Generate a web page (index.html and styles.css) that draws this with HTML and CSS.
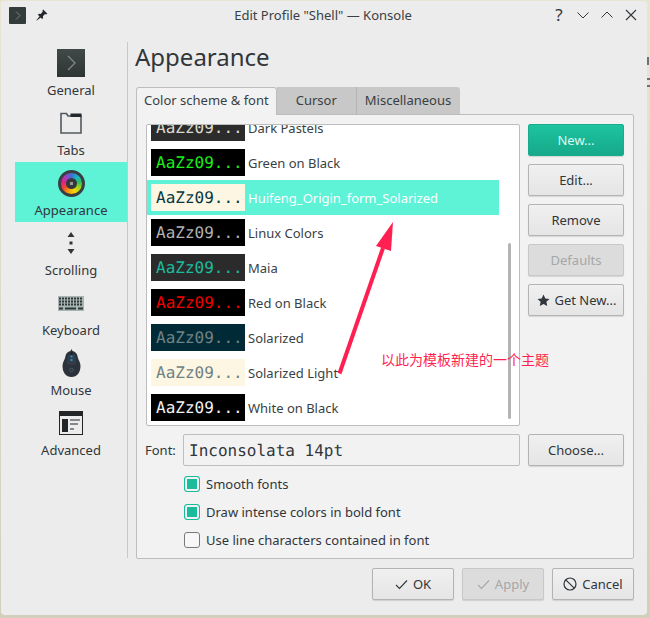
FILE: index.html
```html
<!DOCTYPE html>
<html lang="en">
<head>
<meta charset="utf-8">
<title>Edit Profile "Shell" — Konsole</title>
<link rel="stylesheet" href="styles.css">
</head>
<body>
<span class="desk-mark desk-mark-a"></span>
<span class="desk-mark desk-mark-b"></span>
<div class="window">
  <header class="titlebar">
    <div class="tb-left">
      <svg class="tb-app" width="17" height="17" viewBox="0 0 17 17"><rect width="17" height="17" rx="1" fill="#333b3b"/><path d="M7 4.500l4 4-4 4" fill="none" stroke="#7d8585" stroke-width="1"/></svg>
      <svg class="tb-pin" width="12" height="12" viewBox="0 0 12 12"><path d="M7.200.6l4.200 4.200-1.300.6-1.100-.3-2.100 2.100.2 1.700-1 1L1.900 5.700l1-1 1.700.2 2.100-2.100-.3-1.100zM3.600 7.300l1.100 1.100L.8 11.600.4 11.200z" fill="#23272b"/></svg>
    </div>
    <div class="tb-title">Edit Profile "Shell" — Konsole</div>
    <div class="tb-right">
      <span class="tb-help">?</span>
      <svg width="12" height="12" viewBox="0 0 12 12"><path d="M.5 3.500L6 9l5.500-5.500" fill="none" stroke="#31363b" stroke-width="1"/></svg>
      <svg width="12" height="12" viewBox="0 0 12 12"><path d="M.5 8.500L6 3l5.500 5.500" fill="none" stroke="#31363b" stroke-width="1"/></svg>
      <svg width="12" height="12" viewBox="0 0 12 12"><path d="M1 1l10 10M11 1L1 11" fill="none" stroke="#31363b" stroke-width="1.100"/></svg>
    </div>
  </header>

  <div class="body-row">
    <nav class="sidebar">
      <div class="side-item">
        <div class="side-icon">
          <svg width="28" height="28" viewBox="0 0 28 28"><defs><linearGradient id="tg" x1="0" y1="0" x2="0" y2="1"><stop offset="0" stop-color="#414949"/><stop offset="1" stop-color="#2e3434"/></linearGradient></defs><rect width="28" height="28" fill="url(#tg)"/><path d="M11 7l7 7-7 7" fill="none" stroke="#7f8787" stroke-width="1.300"/></svg>
        </div>
        <span>General</span>
      </div>
      <div class="side-item">
        <div class="side-icon">
          <svg width="22" height="22" viewBox="0 0 22 22"><path d="M1 3.500V21h20V4H8L6.500 1.500H1z" fill="none" stroke="#53595e" stroke-width="1.600"/><rect x="10.500" y="1.500" width="11" height="3.500" fill="#23282c"/></svg>
        </div>
        <span>Tabs</span>
      </div>
      <div class="side-item active">
        <div class="side-icon">
          <div class="wheel"><div class="wheel-hub"></div></div>
        </div>
        <span>Appearance</span>
      </div>
      <div class="side-item">
        <div class="side-icon">
          <svg width="8" height="22" viewBox="0 0 8 22"><path d="M4 0l3.500 5H.5zM4 22L.5 17h7z" fill="#31363b"/><rect x="2.500" y="9.500" width="3" height="3" fill="#31363b"/></svg>
        </div>
        <span>Scrolling</span>
      </div>
      <div class="side-item">
        <div class="side-icon">
          <svg width="26" height="15" viewBox="0 0 26 15"><rect width="26" height="15" fill="#a9b5b2"/><path d="M1 2.500h24M1 5.500h24M1 8.500h24" stroke="#2f3838" stroke-width="2" stroke-dasharray="2 1"/><path d="M1 12.500h4M7 12.500h11M20 12.500h5" stroke="#2f3838" stroke-width="2"/></svg>
        </div>
        <span>Keyboard</span>
      </div>
      <div class="side-item">
        <div class="side-icon">
          <svg width="19" height="28" viewBox="0 0 19 28"><path d="M9.500 0l1 2c3 .5 4.800 2.500 5.200 6 .4 2.500 2.800 5 2.800 9 0 6.500-3.500 11-9 11S.5 23.500.5 17c0-4 2.400-6.500 2.800-9C3.700 4.500 5.500 2.500 8.500 2z" fill="#2b323b"/><path d="M5.500 7c1-2.500 7-2.500 8 0l.5 8c-2 1.500-7 1.500-9 0z" fill="#343d47"/><rect x="8.500" y="6.500" width="2" height="2" fill="#1d8fd8"/><rect x="8.500" y="10" width="2" height="2" fill="#1d8fd8"/><rect x="8.500" y="3.500" width="2" height="2" fill="#151a20"/><circle cx="9.500" cy="21" r="1.800" fill="none" stroke="#59636e" stroke-width=".7"/></svg>
        </div>
        <span>Mouse</span>
      </div>
      <div class="side-item">
        <div class="side-icon">
          <svg width="24" height="24" viewBox="0 0 24 24"><rect x=".5" y=".5" width="23" height="23" fill="none" stroke="#232629"/><rect width="24" height="5" fill="#232629"/><rect x="3" y="8" width="6" height="13" fill="#232629"/><path d="M11 9h10M11 13h8M11 18h4" stroke="#232629" stroke-width="1"/></svg>
        </div>
        <span>Advanced</span>
      </div>
    </nav>

    <main class="content">
      <h1 class="heading">Appearance</h1>
      <div class="tabs">
        <div class="tab tab-active">Color scheme &amp; font</div>
        <div class="tab tab-cursor">Cursor</div>
        <div class="tab tab-misc">Miscellaneous</div>
      </div>
      <section class="panel">
        <div class="scheme-row">
          <div class="list">
            <div class="list-inner">
              <div class="row"><span class="swatch s-dark">AaZz09...</span><span>Dark Pastels</span></div>
              <div class="row"><span class="swatch s-green">AaZz09...</span><span>Green on Black</span></div>
              <div class="row selected"><span class="swatch s-huifeng">AaZz09...</span><span>Huifeng_Origin_form_Solarized</span></div>
              <div class="row"><span class="swatch s-linux">AaZz09...</span><span>Linux Colors</span></div>
              <div class="row"><span class="swatch s-maia">AaZz09...</span><span>Maia</span></div>
              <div class="row"><span class="swatch s-red">AaZz09...</span><span>Red on Black</span></div>
              <div class="row"><span class="swatch s-sol">AaZz09...</span><span>Solarized</span></div>
              <div class="row"><span class="swatch s-light">AaZz09...</span><span>Solarized Light</span></div>
              <div class="row"><span class="swatch s-white">AaZz09...</span><span>White on Black</span></div>
            </div>
            <div class="scrollbar"></div>
          </div>
          <div class="side-buttons">
            <div class="btn btn-primary">New...</div>
            <div class="btn">Edit...</div>
            <div class="btn">Remove</div>
            <div class="btn btn-disabled">Defaults</div>
            <div class="btn btn-get">
              <svg width="13" height="13" viewBox="0 0 13 13"><path d="M6.500.5l1.800 3.900 4.200.5-3.100 2.900.8 4.200-3.700-2.100-3.700 2.100.8-4.200L.5 4.900l4.200-.5z" fill="#31363b"/></svg>
              Get New...
            </div>
          </div>
        </div>
        <div class="font-row">
          <label class="font-label">Font:</label>
          <div class="font-input">Inconsolata 14pt</div>
          <div class="btn">Choose...</div>
        </div>
        <div class="checks">
          <div class="check-row"><span class="check on"></span>Smooth fonts</div>
          <div class="check-row"><span class="check on"></span>Draw intense colors in bold font</div>
          <div class="check-row"><span class="check"></span>Use line characters contained in font</div>
        </div>
      </section>
      <footer class="dialog-buttons">
        <div class="btn btn-dialog">
          <svg width="13" height="11" viewBox="0 0 13 11"><path d="M1 6l3.500 3.500L12 1.500" fill="none" stroke="#31363b" stroke-width="1.100"/></svg>
          OK
        </div>
        <div class="btn btn-dialog btn-disabled">
          <svg width="13" height="11" viewBox="0 0 13 11"><path d="M1 6l3.500 3.500L12 1.500" fill="none" stroke="#a5a7a9" stroke-width="1.100"/></svg>
          Apply
        </div>
        <div class="btn btn-dialog">
          <svg width="14" height="14" viewBox="0 0 14 14"><circle cx="7" cy="7" r="6" fill="none" stroke="#31363b" stroke-width="1.200"/><path d="M2.800 2.800l8.400 8.400" stroke="#31363b" stroke-width="1.200"/></svg>
          Cancel
        </div>
      </footer>
    </main>
  </div>
</div>

<svg class="annotation-arrow" width="650" height="618" viewBox="0 0 650 618"><path d="M339.500 373.500L383 248" stroke="#ff1f50" stroke-width="4" fill="none"/><path d="M393 222L391 251L376 246z" fill="#ff1f50"/></svg>
<div class="annotation-text">以此为模板新建的一个主题</div>
</body>
</html>
```

FILE: styles.css
```css
* { box-sizing: border-box; }

html, body { margin: 0; padding: 0; }

body {
  width: 650px;
  height: 618px;
  overflow: hidden;
  position: relative;
  background: linear-gradient(#e9e5d3, #d3cfbd);
  font-family: "Noto Sans", sans-serif;
  font-size: 13px;
  color: #31363b;
  padding: 1px 0 0 1px;
}

.desk-mark {
  position: absolute;
  background: #6d7270;
  left: 647px;
}

.desk-mark-a { top: 57px; width: 2px; height: 8px; }
.desk-mark-b { top: 78px; width: 3px; height: 2px; box-shadow: 0 7px 0 #6d7270; }

.window {
  width: 646px;
  height: 614px;
  background: #ececec;
  border-radius: 4px;
  display: flex;
  flex-direction: column;
  position: relative;
}

.titlebar {
  height: 28px;
  margin-bottom: 2px;
  display: flex;
  align-items: center;
  flex: none;
  padding: 0 10px 0 8px;
  justify-content: space-between;
}

.tb-left { display: flex; align-items: center; gap: 10px; width: 88px; }
.tb-app { display: block; }
.tb-pin { display: block; }

.tb-title {
  flex: 1;
  text-align: center;
  color: #3a3f44;
}

.tb-right { display: flex; align-items: center; gap: 12px; width: 88px; justify-content: flex-end; }
.tb-help { font-size: 17px; line-height: 20px; width: 12px; text-align: center; }

.body-row {
  display: flex;
  flex: 1;
  padding: 11px 0 0 14px;
}

.sidebar {
  width: 113px;
  height: 516px;
  flex: none;
  border-right: 1px solid #8fe3d2;
}

.side-item {
  height: 60px;
  width: 112px;
  padding-top: 5px;
  display: flex;
  flex-direction: column;
  align-items: center;
  line-height: 18px;
}

.side-item.active { background: #5ef2d6; }

.side-icon {
  width: 32px;
  height: 32px;
  margin-bottom: 2px;
  display: flex;
  align-items: center;
  justify-content: center;
}

.side-icon svg { display: block; }

.wheel {
  width: 27px;
  height: 27px;
  border-radius: 50%;
  border: 3px solid #3a3f44;
  background: conic-gradient(#3f6fd0, #19b5c5, #30c060, #a8d418, #f5d90a, #f5a00a, #f0452f, #e0218a, #a03fc0, #3f6fd0);
  display: flex;
  align-items: center;
  justify-content: center;
}

.wheel-hub {
  width: 11px;
  height: 11px;
  border-radius: 50%;
  background: radial-gradient(circle, #9a9a9a 0 1.500px, #33383c 2px);
}

.content {
  flex: 1;
  padding-left: 8px;
  min-width: 0;
}

.heading {
  margin: 0 0 0 -1px;
  font-weight: 400;
  font-size: 24px;
  line-height: 30px;
  height: 45px;
  color: #31363b;
}

.tabs {
  display: flex;
  height: 28px;
  position: relative;
  z-index: 1;
}

.tab {
  height: 27px;
  background: #c8c8c8;
  padding: 0 8px;
  line-height: 26px;
  color: #3a3f44;
  border-right: 1px solid #b4b4b4;
  border-radius: 0 3px 0 0;
}

.tab-cursor { padding: 0 19px; border-radius: 0; }
.tab-misc { padding: 0 9px 0 8px; border-right: none; }

.tab-active {
  height: 28px;
  background: #f2f2f2;
  border: 1px solid #bdbdbd;
  border-bottom: none;
  border-radius: 3px 3px 0 0;
  padding: 0 7px;
  line-height: 25px;
}

.panel {
  width: 498px;
  height: 445px;
  margin-top: -1px;
  background: #f2f2f2;
  border: 1px solid #bdbdbd;
  border-radius: 0 2px 2px 2px;
  padding: 9px;
}

.scheme-row {
  display: flex;
  justify-content: space-between;
}

.list {
  width: 374px;
  height: 302px;
  background: #fff;
  border: 1px solid #bdbdbd;
  border-radius: 2px;
  overflow: hidden;
  position: relative;
}

.list-inner { margin-top: -15px; }

.row {
  width: 352px;
  height: 35px;
  display: flex;
  align-items: center;
  padding-left: 4px;
  gap: 3px;
  color: #3a3f44;
}

.row.selected { background: #5ef2d6; color: #fff; }

.swatch {
  width: 94px;
  height: 27px;
  padding-left: 5px;
  font-family: "DejaVu Sans Mono", monospace;
  font-size: 16px;
  text-rendering: geometricPrecision;
  line-height: 28px;
  white-space: nowrap;
  flex: none;
}

.s-dark { background: #2c2c2c; color: #dcdccc; }
.s-green { background: #000; color: #18f018; }
.s-huifeng { background: #fdf6e3; color: #073642; }
.s-linux { background: #000; color: #b2b2b2; }
.s-maia { background: #2b2b2b; color: #1abc9c; }
.s-red { background: #000; color: #f00000; }
.s-sol { background: #002b36; color: #708284; }
.s-light { background: #fdf6e3; color: #708284; }
.s-white { background: #000; color: #f2f2f2; }

.scrollbar {
  position: absolute;
  left: 361px;
  top: 118px;
  width: 3px;
  height: 176px;
  background: #b4b4b4;
  border-radius: 2px;
}

.side-buttons {
  width: 96px;
  display: flex;
  flex-direction: column;
  gap: 8px;
}

.btn {
  height: 32px;
  width: 96px;
  flex: none;
  display: flex;
  align-items: center;
  justify-content: center;
  gap: 5px;
  background: linear-gradient(#f0f0f0, #e5e5e5);
  border: 1px solid #b3b3b3;
  border-radius: 2px;
  box-shadow: 0 1px 1px rgba(0, 0, 0, .12);
  color: #31363b;
}

.btn-get { padding-left: 1px; }

.btn-primary {
  background: linear-gradient(#1dc49f, #16a98a);
  border-color: #18ab8d;
  color: #dff8f1;
}

.btn-disabled {
  background: #dcdcdc;
  border-color: #c8c8c8;
  color: #a5a7a9;
}

.font-row {
  display: flex;
  align-items: center;
  margin-top: 8px;
}

.font-label {
  width: 37px;
  margin-left: -1px;
  flex: none;
}

.font-input {
  width: 337px;
  height: 32px;
  margin-left: 1px;
  padding-left: 5px;
  border: 1px solid #bdbdbd;
  border-radius: 2px;
  font-family: "DejaVu Sans Mono", monospace;
  font-size: 16px;
  text-rendering: geometricPrecision;
  line-height: 32px;
  color: #31363b;
}

.font-row .btn { margin-left: auto; }

.checks {
  margin: 4px 0 0 38px;
}

.check-row {
  height: 28px;
  display: flex;
  align-items: center;
  gap: 6px;
}

.check {
  width: 16px;
  height: 16px;
  border: 1px solid #777b80;
  border-radius: 3px;
  background: #f7f7f7;
  flex: none;
}

.check.on {
  border-color: #1abc9c;
  background: #1abc9c;
  box-shadow: inset 0 0 0 2px #f2f2f2;
}

.dialog-buttons {
  width: 498px;
  display: flex;
  justify-content: flex-end;
  gap: 8px;
  margin-top: 9px;
}

.btn-dialog { width: 82px; }

.annotation-arrow {
  position: absolute;
  left: 0;
  top: 0;
  pointer-events: none;
}

.annotation-text {
  position: absolute;
  left: 381px;
  top: 349px;
  font-family: "Noto Sans CJK SC", sans-serif;
  font-size: 14px;
  line-height: 20px;
  color: #ff1f50;
  white-space: nowrap;
}
```
